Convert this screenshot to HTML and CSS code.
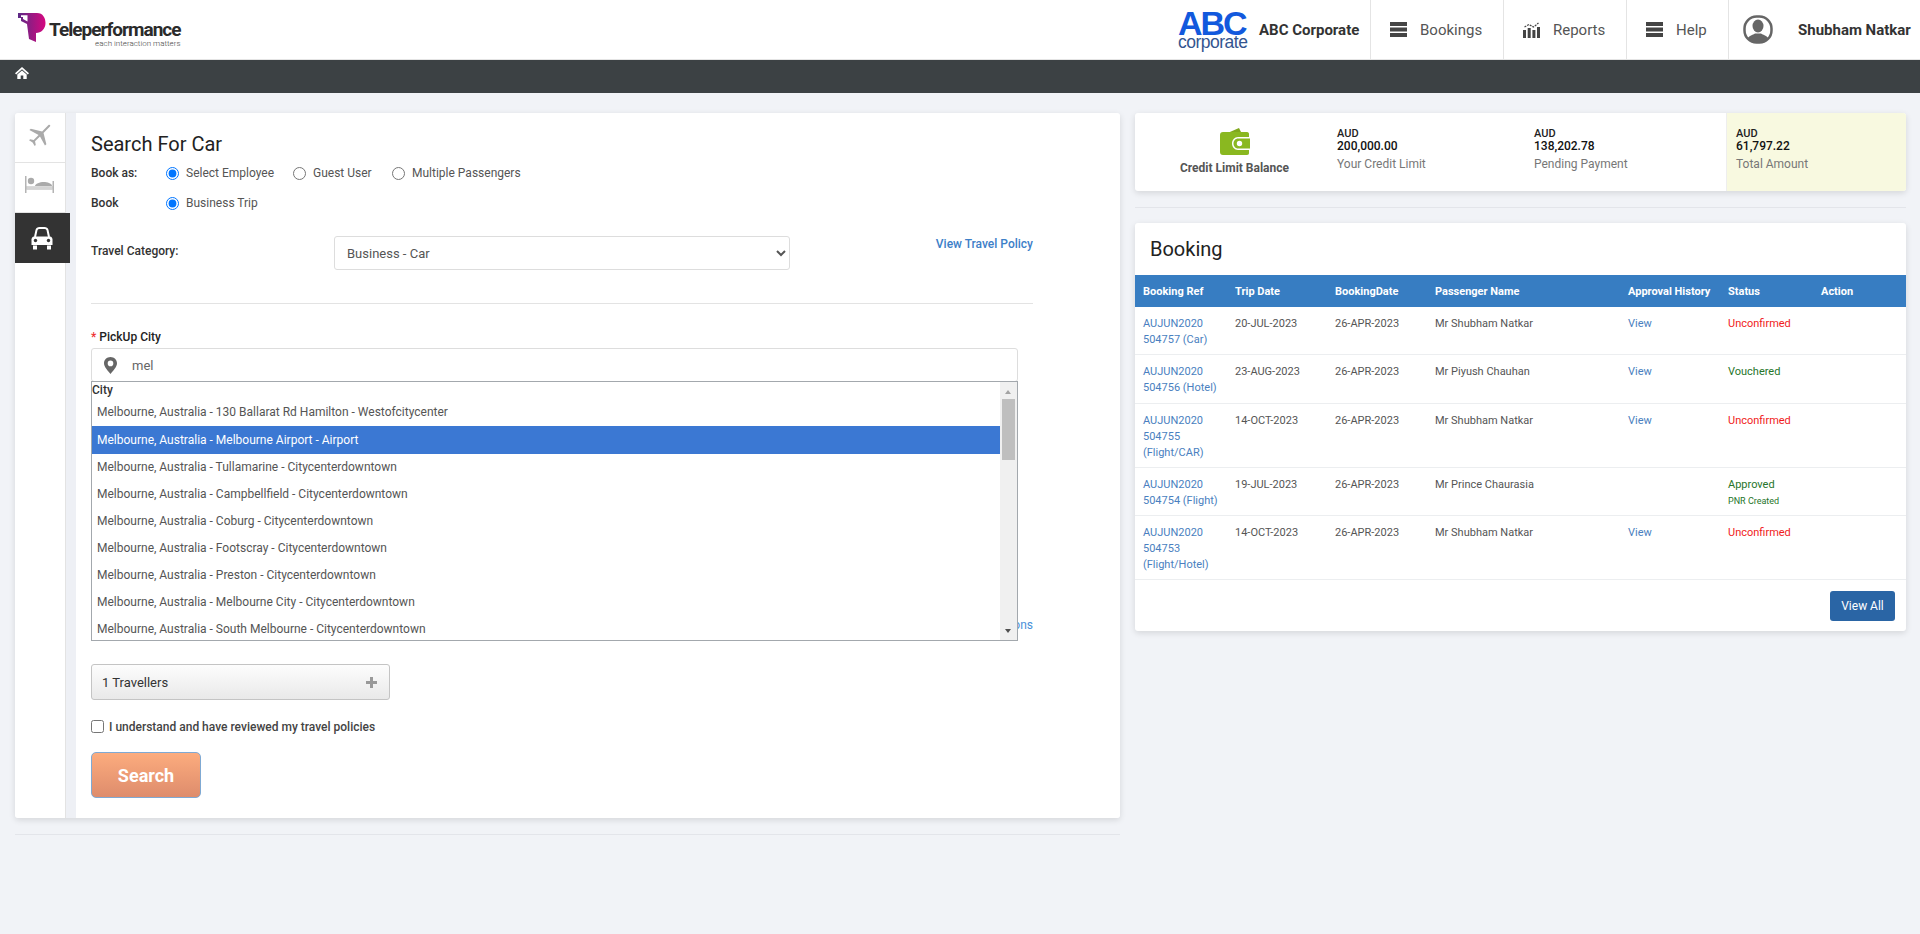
FILE: index.html
```html
<!DOCTYPE html>
<html lang="en">

<head>
    <meta charset="utf-8"/>
    <title>Search For Car</title>
    <link rel="stylesheet" href="styles.css">
</head>

<body>

<header class="topbar">
    <div class="brand">
        <svg class="brand-mark" width="28" height="29" viewBox="0 0 28 29">
            <defs>
                <linearGradient id="tpGrad" x1="0" y1="0" x2="1" y2="0">
                    <stop offset="0" stop-color="#5b2a86"/>
                    <stop offset="1" stop-color="#d6087f"/>
                </linearGradient>
            </defs>
            <path d="M0 0H19C25 0 27.500 5 27.500 10C27.500 16 23 20 18 20V29L11 26 9 11 3 8V5H0Z" fill="url(#tpGrad)"/>
            <path d="M3 2.300H9.500V8.500L5 6V4H3Z" fill="#fff"/>
        </svg>
        <div class="brand-text">
            <span class="brand-name">Teleperformance</span>
            <span class="brand-tag">each interaction matters</span>
        </div>
    </div>
    <nav class="nav">
        <div class="company">
            <div class="abc-logo">
                <span class="abc-big">ABC</span>
                <span class="abc-small">corporate</span>
            </div>
            <span class="company-name">ABC Corporate</span>
        </div>
        <a class="nav-item nav-bookings">
            <svg class="nav-icon" width="17" height="15" viewBox="0 0 17 15"><path d="M0 0h17v4H0zM0 5.500h17v4H0zM0 11h17v4H0z" fill="#444"/></svg>
            Bookings
        </a>
        <a class="nav-item nav-reports">
            <svg class="nav-icon" width="17" height="16" viewBox="0 0 17 16">
                <path d="M0 8h3v8H0zM4.700 6h3v10h-3zM9.400 8h3v8h-3zM14 5h3v11h-3z" fill="#444"/>
                <path d="M1.500 5L6 2.500 10.500 5 15.500 1" fill="none" stroke="#444" stroke-width="1.200" stroke-dasharray="2 1"/>
            </svg>
            Reports
        </a>
        <a class="nav-item nav-help">
            <svg class="nav-icon" width="17" height="15" viewBox="0 0 17 15"><path d="M0 0h17v4H0zM0 5.500h17v4H0zM0 11h17v4H0z" fill="#444"/></svg>
            Help
        </a>
        <div class="nav-user">
            <svg width="30" height="29" viewBox="0 0 30 29">
                <defs><clipPath id="avatarClip"><rect x="1.500" y="1.500" width="27" height="26" rx="12"/></clipPath></defs>
                <rect x="1.500" y="1.500" width="27" height="26" rx="12" fill="#fff" stroke="#666" stroke-width="2.500"/>
                <g clip-path="url(#avatarClip)" fill="#666">
                    <ellipse cx="15" cy="11" rx="5.500" ry="6.500"/>
                    <path d="M3 29C3 21 9 20.500 12 18.500H18C21 20.500 27 21 27 29Z"/>
                </g>
            </svg>
            <span class="user-name">Shubham Natkar</span>
        </div>
    </nav>
</header>

<div class="subbar">
    <svg width="14" height="12" viewBox="0 0 14 12"><path d="M7 0L14 6.200 12.800 7.400 7 2.300 1.200 7.400 0 6.200ZM2.300 7.500L7 3.400 11.700 7.500V12H8.300V8.500H5.700V12H2.300Z" fill="#fff"/></svg>
</div>

<main class="content">
    <section class="left-col">
        <div class="search-panel">
            <div class="tabs">
                <div class="tab">
                    <svg width="24" height="22" viewBox="0 0 24 22">
                        <g fill="#aaa" transform="rotate(45 12 11)">
                            <path d="M11 -2C11 -3.500 13 -3.500 13 -2V7L23 13V15L13 12V19L16 21V22.500L12 21.500 8 22.500V21L11 19V12L1 15V13L11 7Z"/>
                        </g>
                    </svg>
                </div>
                <div class="tab">
                    <svg width="29" height="17" viewBox="0 0 29 17">
                        <path d="M0 0h1.500v10.500h26V5H29v12h-1.500v-3.500H1.500V17H0Z" fill="#b4b4b4"/>
                        <path d="M1.500 11h26v2.500h-26z" fill="#d4d4d4"/>
                        <circle cx="6" cy="5" r="3.200" fill="#aaa"/>
                        <path d="M10 10C10 7.500 16 5.500 20 6C24 6.500 27 8 27 10Z" fill="#aaa"/>
                    </svg>
                </div>
                <div class="tab tab-active">
                    <svg width="22" height="23" viewBox="0 0 22 23">
                        <path d="M4 10L5.500 3C6 1.500 7 1 8.500 1H13.500C15 1 16 1.500 16.500 3L18 10" fill="none" stroke="#fff" stroke-width="2"/>
                        <path d="M3 9.500H19C20.500 9.500 21.500 11 21.500 12.500V18H0.500V12.500C0.500 11 1.500 9.500 3 9.500Z" fill="#fff"/>
                        <circle cx="4.500" cy="13.500" r="1.700" fill="#333"/>
                        <circle cx="17.500" cy="13.500" r="1.700" fill="#333"/>
                        <path d="M2 18.500H6V22.500H2ZM16 18.500H20V22.500H16Z" fill="#fff"/>
                    </svg>
                </div>
            </div>
            <div class="gutter"></div>
            <form class="search-form">
                <h2 class="form-title">Search For Car</h2>
                <div class="radio-row">
                    <span class="row-label">Book as:</span>
                    <label class="radio radio-employee"><input type="radio" name="bookas" checked> Select Employee</label>
                    <label class="radio radio-guest"><input type="radio" name="bookas"> Guest User</label>
                    <label class="radio"><input type="radio" name="bookas"> Multiple Passengers</label>
                </div>
                <div class="radio-row">
                    <span class="row-label">Book</span>
                    <label class="radio"><input type="radio" name="book" checked> Business Trip</label>
                </div>
                <div class="category-row">
                    <span class="category-label">Travel Category:</span>
                    <select class="category-select">
                        <option>Business - Car</option>
                    </select>
                    <a class="link-bold policy-link">View Travel Policy</a>
                </div>
                <hr class="form-rule">
                <label class="city-label"><span class="required">*</span> PickUp City</label>
                <div class="city-field">
                    <div class="city-input">
                        <svg width="13" height="17" viewBox="0 0 13 17"><path fill-rule="evenodd" d="M6.500 0C10.100 0 13 2.800 13 6.300 13 10 9 14 6.500 17 4 14 0 10 0 6.300 0 2.800 2.900 0 6.500 0ZM6.500 3.600A2.800 2.800 0 1 0 6.500 9.200 2.800 2.800 0 1 0 6.500 3.600Z" fill="#666"/></svg>
                        <span>mel</span>
                    </div>
                    <div class="city-menu">
                        <ul class="city-list">
                            <li class="city-head">City</li>
                            <li>Melbourne, Australia - 130 Ballarat Rd Hamilton - Westofcitycenter</li>
                            <li class="city-selected">Melbourne, Australia - Melbourne Airport - Airport</li>
                            <li>Melbourne, Australia - Tullamarine - Citycenterdowntown</li>
                            <li>Melbourne, Australia - Campbellfield - Citycenterdowntown</li>
                            <li>Melbourne, Australia - Coburg - Citycenterdowntown</li>
                            <li>Melbourne, Australia - Footscray - Citycenterdowntown</li>
                            <li>Melbourne, Australia - Preston - Citycenterdowntown</li>
                            <li>Melbourne, Australia - Melbourne City - Citycenterdowntown</li>
                            <li>Melbourne, Australia - South Melbourne - Citycenterdowntown</li>
                        </ul>
                        <div class="scroll-track">
                            <span class="scroll-up"></span>
                            <span class="scroll-thumb"></span>
                            <span class="scroll-down"></span>
                        </div>
                    </div>
                </div>
                <div class="terms-row"><a class="terms-link">Terms and Conditions</a></div>
                <div class="travellers">
                    <span>1 Travellers</span>
                    <svg width="11" height="11" viewBox="0 0 11 11"><path d="M4 0h3v4h4v3H7v4H4V7H0V4h4Z" fill="#999"/></svg>
                </div>
                <label class="policy-check"><input type="checkbox"> I understand and have reviewed my travel policies</label>
                <button type="button" class="search-btn">Search</button>
            </form>
        </div>
        <hr class="page-rule">
    </section>

    <section class="right-col">
        <div class="credit-card">
            <div class="credit-title">
                <svg width="30" height="27" viewBox="0 0 30 27">
                    <path d="M3 7L19 0 22 6Z" fill="#7fa81c"/>
                    <path d="M3 4H27C28.500 4 29 5 29 6V9H18C14.500 9 12 12 12 15.500 12 19 14.500 22 18 22H29V25C29 26 28.500 27 27 27H3C1 27 0 26 0 24V7C0 5 1 4 3 4Z" fill="#8ab820"/>
                    <path fill-rule="evenodd" d="M18 10.500H30V20.500H18C15.500 20.500 13.500 18.300 13.500 15.500 13.500 12.700 15.500 10.500 18 10.500ZM19.500 12.800A2.700 2.700 0 1 0 19.500 18.200 2.700 2.700 0 1 0 19.500 12.800Z" fill="#8ab820"/>
                </svg>
                <span>Credit Limit Balance</span>
            </div>
            <div class="credit-stat credit-limit">
                <b class="cur">AUD</b>
                <b class="amount">200,000.00</b>
                <span class="stat-label">Your Credit Limit</span>
            </div>
            <div class="credit-stat credit-pending">
                <b class="cur">AUD</b>
                <b class="amount">138,202.78</b>
                <span class="stat-label">Pending Payment</span>
            </div>
            <div class="credit-stat credit-total">
                <b class="cur">AUD</b>
                <b class="amount">61,797.22</b>
                <span class="stat-label">Total Amount</span>
            </div>
        </div>
        <hr class="side-rule">
        <div class="booking-card">
            <h2 class="booking-title">Booking</h2>
            <table class="booking-table">
                <colgroup>
                    <col class="col-ref"><col class="col-date"><col class="col-date">
                    <col class="col-name"><col class="col-approval"><col class="col-status"><col>
                </colgroup>
                <thead>
                <tr>
                    <th>Booking Ref</th>
                    <th>Trip Date</th>
                    <th>BookingDate</th>
                    <th>Passenger Name</th>
                    <th>Approval History</th>
                    <th>Status</th>
                    <th>Action</th>
                </tr>
                </thead>
                <tbody>
                <tr>
                    <td><a class="link">AUJUN2020 504757 (Car)</a></td>
                    <td>20-JUL-2023</td>
                    <td>26-APR-2023</td>
                    <td>Mr Shubham Natkar</td>
                    <td><a class="link">View</a></td>
                    <td class="st-red">Unconfirmed</td>
                    <td></td>
                </tr>
                <tr>
                    <td><a class="link">AUJUN2020 504756 (Hotel)</a></td>
                    <td>23-AUG-2023</td>
                    <td>26-APR-2023</td>
                    <td>Mr Piyush Chauhan</td>
                    <td><a class="link">View</a></td>
                    <td class="st-green">Vouchered</td>
                    <td></td>
                </tr>
                <tr>
                    <td><a class="link">AUJUN2020 504755 (Flight/CAR)</a></td>
                    <td>14-OCT-2023</td>
                    <td>26-APR-2023</td>
                    <td>Mr Shubham Natkar</td>
                    <td><a class="link">View</a></td>
                    <td class="st-red">Unconfirmed</td>
                    <td></td>
                </tr>
                <tr>
                    <td><a class="link">AUJUN2020 504754 (Flight)</a></td>
                    <td>19-JUL-2023</td>
                    <td>26-APR-2023</td>
                    <td>Mr Prince Chaurasia</td>
                    <td></td>
                    <td class="st-green">Approved<br><small class="st-note">PNR Created</small></td>
                    <td></td>
                </tr>
                <tr>
                    <td><a class="link">AUJUN2020 504753 (Flight/Hotel)</a></td>
                    <td>14-OCT-2023</td>
                    <td>26-APR-2023</td>
                    <td>Mr Shubham Natkar</td>
                    <td><a class="link">View</a></td>
                    <td class="st-red">Unconfirmed</td>
                    <td></td>
                </tr>
                </tbody>
            </table>
            <div class="booking-foot">
                <button type="button" class="view-all">View All</button>
            </div>
        </div>
    </section>
</main>

</body>

</html>
```

FILE: styles.css
```css
* {
    box-sizing: border-box;
}

body {
    margin: 0;
    min-height: 934px;
    background-color: #f1f3f7;
    font-family: Roboto, "Liberation Sans", sans-serif;
    font-size: 12px;
    color: #555;
}

/* top bar */
.topbar {
    display: flex;
    justify-content: space-between;
    height: 60px;
    background-color: #fff;
    border-bottom: 1px solid #e4e4e4;
}

.brand {
    display: flex;
    align-items: flex-start;
    padding: 13px 0 0 18px;
}

.brand-text {
    display: flex;
    flex-direction: column;
    align-items: flex-end;
    margin-left: 3px;
    padding-top: 7px;
}

.brand-name {
    font-size: 19px;
    line-height: 20px;
    font-weight: 700;
    color: #2b2b2b;
    letter-spacing: -1px;
}

.brand-tag {
    font-size: 8px;
    line-height: 8px;
    font-weight: 300;
    color: #444;
}

.nav {
    display: flex;
    align-items: stretch;
}

.company {
    display: flex;
    align-items: center;
    width: 192px;
}

.abc-logo {
    display: flex;
    flex-direction: column;
    align-self: flex-start;
    width: 81px;
    padding-top: 11px;
    font-family: "Liberation Sans", sans-serif;
}

.abc-big {
    font-size: 34px;
    line-height: 25px;
    font-weight: 700;
    letter-spacing: -2px;
    color: #1259dd;
}

.abc-small {
    margin-top: -2px;
    font-size: 17.500px;
    line-height: 16px;
    letter-spacing: -0.500px;
    color: #34558f;
}

.company-name {
    font-size: 15px;
    font-weight: 700;
    color: #333;
    white-space: nowrap;
}

.nav-item {
    display: flex;
    align-items: center;
    border-left: 1px solid #e4e4e4;
    font-size: 15px;
    color: #555;
}

.nav-icon {
    flex: none;
    margin-right: 13px;
}

.nav-bookings {
    width: 133px;
    padding-left: 19px;
}

.nav-reports {
    width: 123px;
    padding-left: 19px;
}

.nav-help {
    width: 102px;
    padding-left: 19px;
}

.nav-user {
    display: flex;
    align-items: center;
    width: 192px;
    padding-left: 14px;
    border-left: 1px solid #e4e4e4;
}

.user-name {
    margin-left: 25px;
    font-size: 15px;
    font-weight: 700;
    color: #333;
    white-space: nowrap;
}

.subbar {
    height: 33px;
    padding: 7px 0 0 15px;
    background-color: #3c4144;
}

.subbar svg {
    display: block;
}

/* page columns */
.content {
    display: flex;
    gap: 15px;
    padding: 20px 14px 0 15px;
}

.left-col {
    width: 1105px;
}

.right-col {
    width: 771px;
}

.search-panel {
    display: flex;
    height: 705px;
    border-radius: 3px;
    box-shadow: 0 2px 6px rgba(0, 0, 0, 0.12);
}

.tabs {
    width: 51px;
    background-color: #fff;
    border-right: 1px solid #e3e3e3;
    border-radius: 3px 0 0 3px;
}

.tab {
    display: flex;
    align-items: center;
    justify-content: center;
    height: 50px;
    padding: 0 1px 6px 0;
    border-bottom: 1px solid #e3e3e3;
}

.tab-active {
    position: relative;
    width: 55px;
    padding: 0 1px 0 0;
    background-color: #333;
    border-bottom: none;
}

.gutter {
    width: 10px;
    background-color: #eef0f5;
}

.search-form {
    flex: 1;
    padding: 18px 87px 0 15px;
    background-color: #fff;
    border-radius: 0 3px 3px 0;
}

.form-title {
    margin: 0;
    font-size: 20px;
    line-height: 27px;
    font-weight: 400;
    color: #222;
}

.radio-row {
    display: flex;
    align-items: center;
    height: 30px;
}

.row-label {
    width: 74px;
    font-weight: 500;
    color: #333;
}

.radio {
    display: flex;
    align-items: center;
    color: #555;
}

.radio input {
    margin: 0 7px 0 1px;
    accent-color: #0075ff;
}

.radio-employee {
    width: 127px;
}

.radio-guest {
    width: 99px;
}

.category-row {
    display: flex;
    align-items: flex-start;
    margin-top: 18px;
}

.category-label {
    width: 243px;
    margin-top: 8px;
    font-weight: 500;
    color: #333;
}

.category-select {
    width: 456px;
    height: 34px;
    padding-left: 8px;
    background-color: #fff;
    border: 1px solid #ddd;
    border-radius: 3px;
    font-family: Roboto, "Liberation Sans", sans-serif;
    font-size: 13px;
    color: #555;
}

.link-bold {
    margin-left: auto;
    font-weight: 500;
    color: #3d80c8;
}

.policy-link {
    margin-top: 1px;
}

.form-rule {
    margin: 33px 0 0;
    border: none;
    border-top: 1px solid #e3e3e3;
}

.city-label {
    display: block;
    margin-top: 26px;
    line-height: 14px;
    font-weight: 500;
    color: #222;
}

.required {
    color: #e33;
}

.city-field {
    position: relative;
    width: 927px;
    margin-top: 4px;
}

.city-input {
    display: flex;
    align-items: center;
    gap: 15px;
    height: 34px;
    padding-left: 12px;
    border: 1px solid #ddd;
    border-radius: 3px;
    font-size: 13px;
    color: #666;
}

.city-menu {
    position: absolute;
    top: 33px;
    left: 0;
    z-index: 1;
    display: flex;
    width: 100%;
    height: 260px;
    overflow: hidden;
    background-color: #fff;
    border: 1px solid #a3a8ad;
}

.city-list {
    flex: 1;
    margin: 0;
    padding: 0;
    list-style: none;
}

.city-list li {
    height: 27px;
    padding-left: 5px;
    line-height: 27px;
    color: #555;
    white-space: nowrap;
}

.city-list .city-head {
    height: 17px;
    padding-left: 0;
    line-height: 17px;
    font-weight: 500;
    color: #333;
}

.city-list .city-selected {
    height: 28px;
    line-height: 28px;
    background-color: #3b78d3;
    color: #fff;
}

.scroll-track {
    position: relative;
    width: 17px;
    background-color: #f0f0f0;
}

.scroll-thumb {
    position: absolute;
    top: 17px;
    left: 2px;
    width: 13px;
    height: 61px;
    background-color: #bfbfbf;
}

.scroll-up,
.scroll-down {
    position: absolute;
    left: 5px;
    width: 0;
    height: 0;
    border-left: 3.500px solid transparent;
    border-right: 3.500px solid transparent;
}

.scroll-up {
    top: 8px;
    border-bottom: 4px solid #a3a3a3;
}

.scroll-down {
    bottom: 7px;
    border-top: 4px solid #505050;
}

.terms-row {
    margin-top: 235px;
    line-height: 16px;
    text-align: right;
}

.terms-link {
    color: #4a90d9;
}

.travellers {
    display: flex;
    align-items: center;
    justify-content: space-between;
    width: 299px;
    height: 36px;
    margin-top: 31px;
    padding: 0 12px 0 10px;
    background: linear-gradient(#fdfdfd, #e9e9e9);
    border: 1px solid #c4c4c4;
    border-radius: 3px;
    font-size: 13px;
    color: #333;
}

.policy-check {
    display: flex;
    align-items: center;
    margin-top: 20px;
    height: 13px;
    font-weight: 500;
    color: #444;
}

.policy-check input {
    margin: 0 5px 0 0;
}

.search-btn {
    display: block;
    width: 110px;
    height: 46px;
    margin-top: 19px;
    background: linear-gradient(#fcac7e, #de8c6c);
    border: 1px solid #7fa9d3;
    border-radius: 5px;
    font-family: Roboto, "Liberation Sans", sans-serif;
    font-size: 18px;
    font-weight: 700;
    color: #fff;
}

.page-rule {
    margin: 16px 0 0;
    border: none;
    border-top: 1px solid #e3e5ea;
}

/* credit summary */
.credit-card {
    display: flex;
    height: 78px;
    background-color: #fff;
    border-radius: 3px;
    box-shadow: 0 2px 6px rgba(0, 0, 0, 0.12);
}

.credit-title {
    display: flex;
    flex-direction: column;
    align-items: center;
    width: 202px;
    padding: 15px 3px 0 0;
    font-weight: 700;
    color: #555;
}

.credit-title span {
    margin-top: 6px;
}

.credit-stat {
    display: flex;
    flex-direction: column;
    padding-top: 15px;
}

.credit-limit {
    width: 197px;
}

.credit-pending {
    width: 192px;
}

.credit-total {
    flex: 1;
    padding-left: 9px;
    background-color: #f8f9e0;
    border-left: 1px solid #eeeeee;
    border-radius: 0 3px 3px 0;
}

.cur {
    font-size: 11px;
    line-height: 12px;
    font-weight: 500;
    color: #222;
}

.amount {
    font-size: 12px;
    line-height: 12px;
    font-weight: 500;
    color: #111;
}

.stat-label {
    margin-top: 5px;
    color: #777;
}

.side-rule {
    margin: 16px 0 15px;
    border: none;
    border-top: 1px solid #e3e5ea;
}

/* booking list */
.booking-card {
    background-color: #fff;
    border-radius: 3px;
    box-shadow: 0 2px 6px rgba(0, 0, 0, 0.12);
}

.booking-title {
    margin: 0;
    height: 52px;
    padding-left: 15px;
    font-size: 20px;
    line-height: 52px;
    font-weight: 400;
    color: #222;
}

.booking-table {
    width: 100%;
    border-collapse: collapse;
    table-layout: fixed;
    font-size: 11px;
}

.col-ref {
    width: 92px;
}

.col-date {
    width: 100px;
}

.col-name {
    width: 193px;
}

.col-approval {
    width: 100px;
}

.col-status {
    width: 93px;
}

.booking-table th {
    height: 32px;
    padding: 0 0 0 8px;
    background-color: #377dc2;
    font-size: 11px;
    font-weight: 700;
    color: #fff;
    text-align: left;
}

.booking-table td {
    padding: 9px 8px 6px;
    border-bottom: 1px solid #eceef0;
    line-height: 16px;
    vertical-align: top;
    color: #555;
}

.booking-table tbody tr:nth-child(2) td {
    padding-bottom: 7px;
}

.booking-table td.st-red {
    color: #f01c1c;
}

.booking-table td.st-green {
    color: #26752a;
}

.st-note {
    font-size: 9px;
}

.link {
    color: #4a7fc0;
}

.booking-foot {
    display: flex;
    justify-content: flex-end;
    padding: 11px 11px 10px 0;
}

.view-all {
    width: 65px;
    height: 30px;
    background-color: #2a65a5;
    border: none;
    border-radius: 3px;
    font-family: Roboto, "Liberation Sans", sans-serif;
    font-size: 12px;
    color: #fff;
}
```
